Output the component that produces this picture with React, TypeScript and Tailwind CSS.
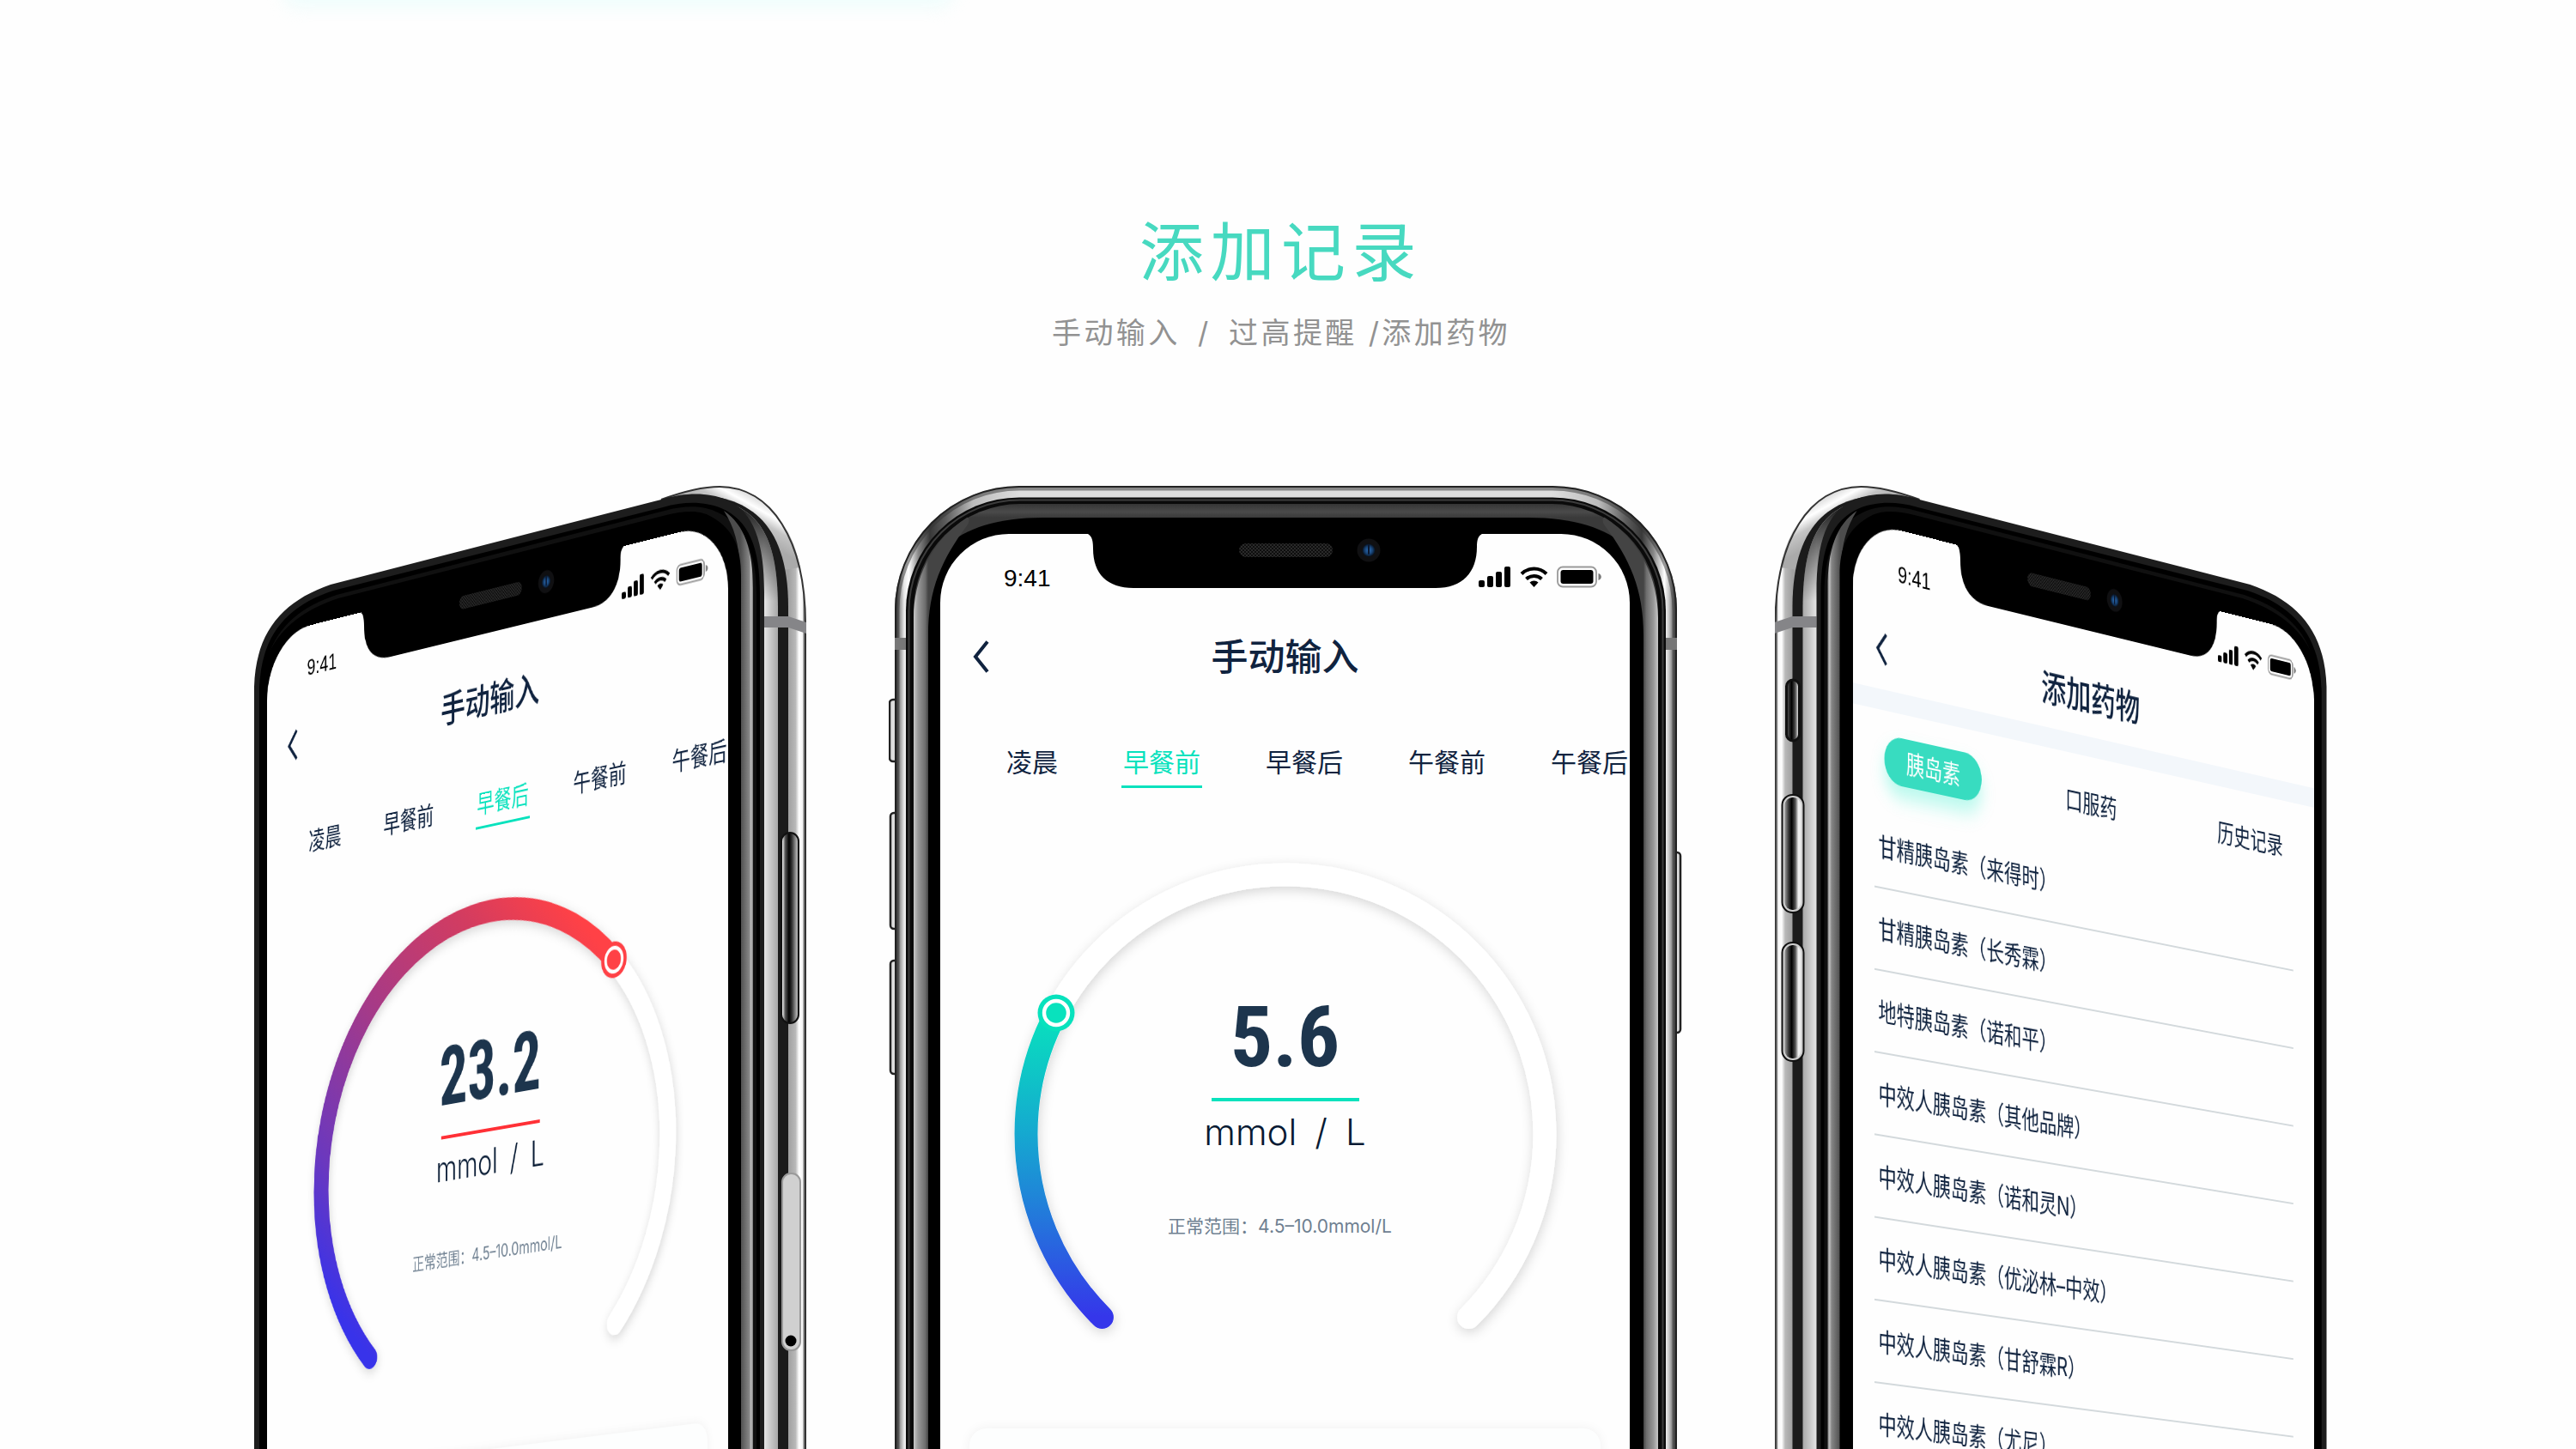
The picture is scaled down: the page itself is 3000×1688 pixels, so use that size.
import type { ReactNode } from "react";

const meals = ["凌晨", "早餐前", "早餐后", "午餐前", "午餐后"];

const medicineTabs = ["胰岛素", "口服药", "历史记录"];

const medicines = [
  "甘精胰岛素（来得时）",
  "甘精胰岛素（长秀霖）",
  "地特胰岛素（诺和平）",
  "中效人胰岛素（其他品牌）",
  "中效人胰岛素（诺和灵N）",
  "中效人胰岛素（优泌林–中效）",
  "中效人胰岛素（甘舒霖R）",
  "中效人胰岛素（尤尼）",
];

interface Reading {
  value: string;
  meal: string;
  line: string;
  knob: string;
  knobX: number;
  knobY: number;
  gradient: { id: string; x2: number; y2: number; stops: [string, string][] };
}

const highReading: Reading = {
  value: "23.2",
  meal: "早餐后",
  line: "bg-[#ff3036]",
  knob: "#ff4146",
  knobX: 212,
  knobY: -215,
  gradient: {
    id: "gauge-high",
    x2: 213,
    y2: -213,
    stops: [["0", "#3833ea"], ["0.2", "#6c38bd"], ["0.5", "#a53a88"], ["0.8", "#d33c60"], ["1", "#ff4146"]],
  },
};

const normalReading: Reading = {
  value: "5.6",
  meal: "早餐前",
  line: "bg-[#08e2bd]",
  knob: "#08e2bd",
  knobX: -267,
  knobY: -141,
  gradient: {
    id: "gauge-normal",
    x2: -213,
    y2: -141,
    stops: [["0", "#3536ea"], ["0.4", "#1f86d8"], ["0.6", "#15a8d0"], ["1", "#08e2bd"]],
  },
};

export default function App() {
  return (
    <main className="relative flex h-screen flex-col items-center overflow-hidden bg-[#fefefe] font-['Inter','Noto_Sans_CJK_SC',sans-serif]">
      <div className="absolute -top-6 left-[11%] h-8 w-[26%] rounded-full bg-[#eefdfc] blur-[10px]" />

      <header className="flex flex-col items-center pt-[244px] pr-4">
        <h1 className="text-[75px] leading-[100px] tracking-widest text-[#47d9c0]">添加记录</h1>
        <p className="mt-5 text-[34px] leading-[48px] tracking-widest text-[#929292]">
          手动输入&ensp;/&ensp;过高提醒 /添加药物
        </p>
      </header>

      <section className="mt-[148px] flex items-start gap-24 pl-[6px]">
        <div className="relative w-[643px] shrink-0">
          <SidePhone side="left" />
          <Screen className="top-0 left-0 [transform:matrix3d(0.6238,-0.1724,0,-0.0000814,0,0.94,0,0,0,0,1,0,15,181,0,1)]">
            <ReadingScreen reading={highReading} />
          </Screen>
        </div>
        <div className="relative w-[936px] shrink-0">
          <FrontPhone />
          <Screen className="top-[62px] left-[60px]">
            <ReadingScreen reading={normalReading} />
          </Screen>
        </div>
        <div className="relative w-[643px] shrink-0">
          <SidePhone side="right" />
          <Screen
            sensorX={-56}
            className="top-0 left-0 [transform:matrix3d(0.7234,0.1845,0,0.00008709,0,1.00574,0,0,0,0,1,0,90.5,44,0,1)]"
          >
            <MedicineScreen />
          </Screen>
        </div>
      </section>
    </main>
  );
}

function Screen({ className, sensorX = 0, children }: { className: string; sensorX?: number; children: ReactNode }) {
  return (
    <div className={`absolute h-[1400px] w-[803px] origin-top-left overflow-hidden rounded-t-[80px] bg-[#fefefe] text-[#10233f] ${className}`}>
      <Notch sensorX={sensorX} />
      <div className="flex h-[100px] items-center justify-between pr-[33px] pl-[74px] text-black">
        <span className="pt-1 font-['Liberation_Sans',sans-serif] text-[28px] leading-9">9:41</span>
        <StatusIcons />
      </div>
      {children}
    </div>
  );
}

function NavBar({ title }: { title: string }) {
  return (
    <div className="grid h-[86px] grid-cols-[1fr_auto_1fr] items-center">
      <button aria-label="返回" className="justify-self-start pl-[38px]">
        <svg width="20" height="38" viewBox="0 0 20 38" fill="none">
          <path d="M17 1.500 3 19l14 17.500" stroke="#10233f" strokeWidth="4" />
        </svg>
      </button>
      <h2 className="text-[43px] leading-[60px] font-medium">{title}</h2>
    </div>
  );
}

function ReadingScreen({ reading }: { reading: Reading }) {
  return (
    <>
      <NavBar title="手动输入" />
      <div className="mt-[57px] flex gap-[72px] pl-[75px] text-[30px] leading-[46px] whitespace-nowrap">
        {meals.map((meal) => (
          <button
            key={meal}
            className={`shrink-0 border-b-[3px] px-[2px] pb-1 ${meal === reading.meal ? "border-[#08e2bd] text-[#08e2bd]" : "border-transparent"}`}
          >
            {meal}
          </button>
        ))}
      </div>
      <div className="relative mt-[63px] flex justify-center">
        <Gauge reading={reading} />
        <div className="absolute inset-0 flex flex-col items-center pt-[183px]">
          <span className="font-['Roboto_Condensed','Roboto',sans-serif] text-[98px] leading-[90px] font-bold text-[#1d354d]">
            {reading.value}
          </span>
          <span className={`mt-[25px] h-1 w-[172px] ${reading.line}`} />
          <span className="mt-[11px] text-[42px] leading-[50px] font-light text-[#071a33]">mmol&ensp;/&ensp;L</span>
          <span className="mt-[69px] pr-3 text-[21px] leading-8 text-[#6f8091]">正常范围：4.5–10.0mmol/L</span>
        </div>
      </div>
      <div className="mx-[34px] mt-[43px] h-[360px] rounded-[20px] bg-[#fdfefe] shadow-[0_0_14px_rgba(0,0,0,0.06)]" />
    </>
  );
}

function MedicineScreen() {
  return (
    <>
      <NavBar title="添加药物" />
      <div className="mt-1 h-6 bg-[#f3f7fb]" />
      <div className="mt-7 flex gap-[107px] pl-[52px] text-[30px] leading-[56px] whitespace-nowrap">
        {medicineTabs.map((tab, i) => (
          <button
            key={tab}
            className={`shrink-0 rounded-full px-9 ${i === 0 ? "bg-[#38dcc0] text-white shadow-[0_14px_22px_rgba(56,240,205,0.35)]" : ""}`}
          >
            {tab}
          </button>
        ))}
      </div>
      <ul className="mr-[38px] ml-9 pt-[28px] text-[30px]">
        {medicines.map((name) => (
          <li key={name} className="h-24 border-b-2 border-[#d3d9dc] pl-[6px] leading-[94px]">
            {name}
          </li>
        ))}
      </ul>
    </>
  );
}

function Gauge({ reading }: { reading: Reading }) {
  const { id, x2, y2, stops } = reading.gradient;
  return (
    <svg width="680" height="640" viewBox="-340 -340 680 640" fill="none" strokeLinecap="round">
      <defs>
        <linearGradient id={id} gradientUnits="userSpaceOnUse" x1="-213" y1="213" x2={x2} y2={y2}>
          {stops.map(([offset, color]) => (
            <stop key={offset} offset={offset} stopColor={color} />
          ))}
        </linearGradient>
        <filter id={`${id}-shadow`} x="-20%" y="-20%" width="140%" height="140%">
          <feDropShadow dx="1" dy="4" stdDeviation="7" floodOpacity="0.16" />
        </filter>
      </defs>
      <path d="M-213.546 213.546A302 302 0 1 1 213.546 213.546" stroke="#fff" strokeWidth="27" filter={`url(#${id}-shadow)`} />
      <path
        d={`M-213.546 213.546A302 302 0 0 1 -302 0A302 302 0 0 1 ${reading.knobX} ${reading.knobY}`}
        stroke={`url(#${id})`}
        strokeWidth="27"
      />
      <circle cx={reading.knobX} cy={reading.knobY} r="21.500" fill={reading.knob} />
      <circle cx={reading.knobX} cy={reading.knobY} r="14" stroke="#fff" strokeWidth="4.400" />
    </svg>
  );
}

function StatusIcons() {
  return (
    <svg width="143" height="26" viewBox="0 0 143 26">
      <rect x="0" y="17" width="7" height="8" rx="2" />
      <rect x="10" y="12" width="7" height="13" rx="2" />
      <rect x="20" y="7" width="7" height="18" rx="2" />
      <rect x="30" y="1" width="7" height="24" rx="2" />
      <g fill="none" stroke="#000" strokeWidth="4">
        <path d="M50 9.500a20.500 20.500 0 0 1 29 0" />
        <path d="M55.500 15.500a13 13 0 0 1 18 0" />
      </g>
      <path d="M59.500 19.500a7.500 7.500 0 0 1 10 0L64.500 25z" />
      <rect x="92" y="1.500" width="45" height="23" rx="6" fill="none" stroke="#999" strokeWidth="1.800" />
      <rect x="95.500" y="5" width="38" height="16" rx="3" />
      <path d="M139.500 9v8c2-.6 3.300-2.200 3.300-4s-1.300-3.400-3.300-4z" fill="#777" />
    </svg>
  );
}

function Notch({ sensorX }: { sensorX: number }) {
  return (
    <svg className="absolute top-0 left-0" width="803" height="66" viewBox="0 0 803 66">
      <defs>
        <pattern id="grille" width="4" height="4" patternUnits="userSpaceOnUse">
          <rect width="4" height="4" fill="#0e0e0e" />
          <circle cx="1" cy="1" r="0.9" fill="#383838" />
          <circle cx="3" cy="3" r="0.9" fill="#383838" />
        </pattern>
        <radialGradient id="lens">
          <stop offset="0" stopColor="#2f6fb5" />
          <stop offset="0.6" stopColor="#174274" />
          <stop offset="1" stopColor="#07101c" />
        </radialGradient>
      </defs>
      <path d="M164 -2C174 -1 178 2 178 17c0 30 17 46 47 46h352c31 0 48-18 48-48C625 2 629-1 639-2z" />
      <g transform={`translate(${sensorX} 0)`}>
        <rect x="348" y="11" width="109" height="16" rx="8" fill="url(#grille)" />
        <circle cx="499" cy="19" r="13.500" fill="#101012" />
        <circle cx="499" cy="19" r="7.500" fill="url(#lens)" />
        <rect x="498" y="12" width="2" height="12" rx="1" fill="#0a1830" />
      </g>
    </svg>
  );
}

function FrontPhone() {
  return (
    <svg className="block w-full" viewBox="1035 560 936 1128">
      <defs>
        <linearGradient id="front-steel" gradientUnits="userSpaceOnUse" x1="1042" y1="0" x2="1953" y2="0">
          <stop offset="0" stopColor="#222" />
          <stop offset="0.003" stopColor="#4a4a4a" />
          <stop offset="0.006" stopColor="#8c8c8c" />
          <stop offset="0.012" stopColor="#e8e8e8" />
          <stop offset="0.018" stopColor="#fff" />
          <stop offset="0.03" stopColor="#888" />
          <stop offset="0.045" stopColor="#383838" />
          <stop offset="0.065" stopColor="#5c5c5c" />
          <stop offset="0.1" stopColor="#bbb" />
          <stop offset="0.16" stopColor="#ddd" />
          <stop offset="0.84" stopColor="#ddd" />
          <stop offset="0.9" stopColor="#bbb" />
          <stop offset="0.935" stopColor="#5c5c5c" />
          <stop offset="0.955" stopColor="#383838" />
          <stop offset="0.97" stopColor="#888" />
          <stop offset="0.984" stopColor="#fff" />
          <stop offset="0.99" stopColor="#c4c4c4" />
          <stop offset="0.995" stopColor="#777" />
          <stop offset="1" stopColor="#222" />
        </linearGradient>
        <linearGradient id="front-glass" gradientUnits="userSpaceOnUse" x1="0" y1="586" x2="0" y2="603">
          <stop offset="0" stopColor="#333" />
          <stop offset="0.6" stopColor="#4a4a4a" />
          <stop offset="1" stopColor="#3a3a3a" />
        </linearGradient>
        <linearGradient id="front-sheen-left" gradientUnits="userSpaceOnUse" x1="1064" y1="0" x2="1081" y2="0">
          <stop offset="0" stopColor="#c8c8c8" />
          <stop offset="0.3" stopColor="#999" />
          <stop offset="0.8" stopColor="#6d6d6d" />
          <stop offset="1" stopColor="#444" />
        </linearGradient>
        <linearGradient id="front-sheen-right" gradientUnits="userSpaceOnUse" x1="1931" y1="0" x2="1914" y2="0">
          <stop offset="0" stopColor="#c8c8c8" />
          <stop offset="0.3" stopColor="#999" />
          <stop offset="0.8" stopColor="#6d6d6d" />
          <stop offset="1" stopColor="#444" />
        </linearGradient>
      </defs>

      {/* side buttons */}
      <g fill="#ddd" stroke="#222" strokeWidth="2.500">
        <rect x="1036" y="815" width="14" height="72" rx="4" />
        <rect x="1037" y="947" width="14" height="135" rx="4" />
        <rect x="1037" y="1119" width="14" height="132" rx="4" />
        <rect x="1944" y="993" width="13" height="210" rx="4" />
      </g>

      {/* steel band */}
      <rect x="1042" y="566" width="911" height="1400" rx="145" fill="url(#front-steel)" />
      <rect x="1045" y="569" width="905" height="1394" rx="142" fill="none" stroke="#333" strokeOpacity="0.5" strokeWidth="5" />
      <rect x="1043" y="567" width="909" height="1400" rx="144" fill="none" stroke="#222" strokeWidth="2" />
      <rect x="1042" y="743" width="14" height="14" fill="#777" />
      <rect x="1939" y="743" width="14" height="14" fill="#777" />

      {/* glass */}
      <rect x="1055" y="579.500" width="885" height="1400" rx="132" fill="#0a0a0a" />
      <rect x="1058.500" y="582.500" width="878" height="1400" rx="129" fill="none" stroke="#3c3c3c" strokeWidth="2" />
      <rect x="1064" y="587" width="867" height="1400" rx="124" fill="url(#front-glass)" />
      <path d="M1064 1700V740C1064 650 1110 603 1215 603h565c105 0 151 47 151 137v960z" />
      <path d="M1064 1700V720c0-45 20-90 62-117 3-1 3 4 1 8-30 40-46 75-46 129v960z" fill="url(#front-sheen-left)" />
      <path d="M1931 1700V720c0-45-20-90-62-117-3-1-3 4-1 8 30 40 46 75 46 129v960z" fill="url(#front-sheen-right)" />
    </svg>
  );
}

function SidePhone({ side }: { side: "left" | "right" }) {
  const id = `phone-${side}`;
  return (
    <svg className="block w-full" viewBox={side === "left" ? "296 560 643 1128" : "2067 560 643 1128"}>
      <defs>
        <linearGradient id={`${id}-rim`} gradientUnits="userSpaceOnUse" x1="918" y1="0" x2="939" y2="0">
          <stop offset="0" stopColor="#a0a0a0" />
          <stop offset="0.4" stopColor="#b8b8b8" />
          <stop offset="0.6" stopColor="#fff" />
          <stop offset="0.8" stopColor="#f4f4f4" />
          <stop offset="0.86" stopColor="#777" />
          <stop offset="1" stopColor="#999" />
        </linearGradient>
        <linearGradient id={`${id}-corner`} gradientUnits="userSpaceOnUse" x1="872" y1="622" x2="892" y2="586">
          <stop offset="0" stopColor="#aaa" />
          <stop offset="0.45" stopColor="#c4c4c4" />
          <stop offset="0.75" stopColor="#fff" />
          <stop offset="1" stopColor="#ddd" />
        </linearGradient>
        <linearGradient id={`${id}-strip`} gradientUnits="userSpaceOnUse" x1="890" y1="0" x2="906" y2="0">
          <stop offset="0" stopColor="#e6e6e6" />
          <stop offset="0.5" stopColor="#c6c6c6" />
          <stop offset="1" stopColor="#a8a8a8" />
        </linearGradient>
        <linearGradient id={`${id}-fade`} gradientUnits="userSpaceOnUse" x1="0" y1="590" x2="0" y2="700">
          <stop offset="0" stopColor="#1c1c1c" />
          <stop offset="0.4" stopColor="#1c1c1c" stopOpacity="0.6" />
          <stop offset="1" stopColor="#1c1c1c" stopOpacity="0" />
        </linearGradient>
        <linearGradient id={`${id}-bevel`} gradientUnits="userSpaceOnUse" x1="862" y1="0" x2="877" y2="0">
          <stop offset="0" stopColor="#4c4c4c" />
          <stop offset="0.7" stopColor="#868686" />
          <stop offset="0.85" stopColor="#c0c0c0" />
          <stop offset="1" stopColor="#777" />
        </linearGradient>
        <linearGradient id={`${id}-button`} gradientUnits="userSpaceOnUse" x1="909" y1="0" x2="931" y2="0">
          <stop offset="0.1" stopColor="#eee" />
          <stop offset="0.25" stopColor="#555" />
          <stop offset="0.45" stopColor="#000" />
          <stop offset="0.6" stopColor="#333" />
          <stop offset="0.85" stopColor="#aaa" />
        </linearGradient>
      </defs>
      <g transform={side === "right" ? "translate(3005.5 0) scale(-1 1)" : undefined}>
        {/* steel rim */}
        <path d="M770 582C800 571 820 567 838 567c60 0 100 62 100 160V1700H800z" fill={`url(#${id}-rim)`} />
        <path d="M775 580C800 571 820 567 838 567c48 0 82 36 94 94L912 664C900 610 872 586 840 580z" fill={`url(#${id}-corner)`} />
        <path d="M770 582C800 571 820 567 838 567c60 0 100 62 100 160V1700" fill="none" stroke="#333" strokeWidth="2" />
        <path d="M800 577c62-2 118 22 118 130v993H800z" fill="#1b1b1b" />
        <path d="M850 586c40 16 56 50 56 124v990h-60z" fill={`url(#${id}-strip)`} />
        <path d="M850 586c40 16 56 50 56 124v10h-60z" fill={`url(#${id}-fade)`} />
        <path d="M890 718h28l21 7v13l-21-7h-28z" fill="#858588" />

        {/* front glass */}
        <path
          d="M296 1700V800C298 735 330 700 385 681L770 582c30-9 55-8 76 0 32 14 44 50 44 108V1700z"
          fill="#1d1d1d"
        />
        <path d="M302 1700V802C304 740 334 706 388 688L772 591c28-8 50-6 68 1 32 14 45 45 45 100V1700z" fill="#000" />
        <path d="M306 1700V804C308 744 338 711 392 693L774 595c26-7 46-6 62 2 30 14 45 45 45 95V1700z" fill="#101010" />
        <path d="M843 595c24 16 34 46 34 90v1015h-16V660c0-26-6-46-18-65z" fill={`url(#${id}-bevel)`} />
        <path d="M302 1700V806C306 748 340 715 394 697L776 600c24-6 42-6 56 4 22 14 31 34 31 66V1700z" fill="#000" />

        {side === "left" ? (
          <>
            <rect x="910" y="970" width="20" height="222" rx="10" fill={`url(#${id}-button)`} stroke="#111" strokeWidth="2" />
            <rect x="911" y="1367" width="21" height="206" rx="10" fill="#d0d0d0" stroke="#999" strokeWidth="2" />
            <circle cx="921" cy="1562" r="6.500" />
          </>
        ) : (
          <>
            <rect x="910" y="792" width="15" height="71" rx="7.500" fill={`url(#${id}-button)`} stroke="#111" strokeWidth="3" />
            <rect x="905" y="926" width="25" height="137" rx="12" fill="#ccc" stroke="#111" strokeWidth="2" />
            <rect x="908" y="929" width="19" height="131" rx="9" fill={`url(#${id}-button)`} />
            <rect x="905" y="1098" width="25" height="138" rx="12" fill="#ccc" stroke="#111" strokeWidth="2" />
            <rect x="908" y="1101" width="19" height="132" rx="9" fill={`url(#${id}-button)`} />
          </>
        )}
      </g>
    </svg>
  );
}
